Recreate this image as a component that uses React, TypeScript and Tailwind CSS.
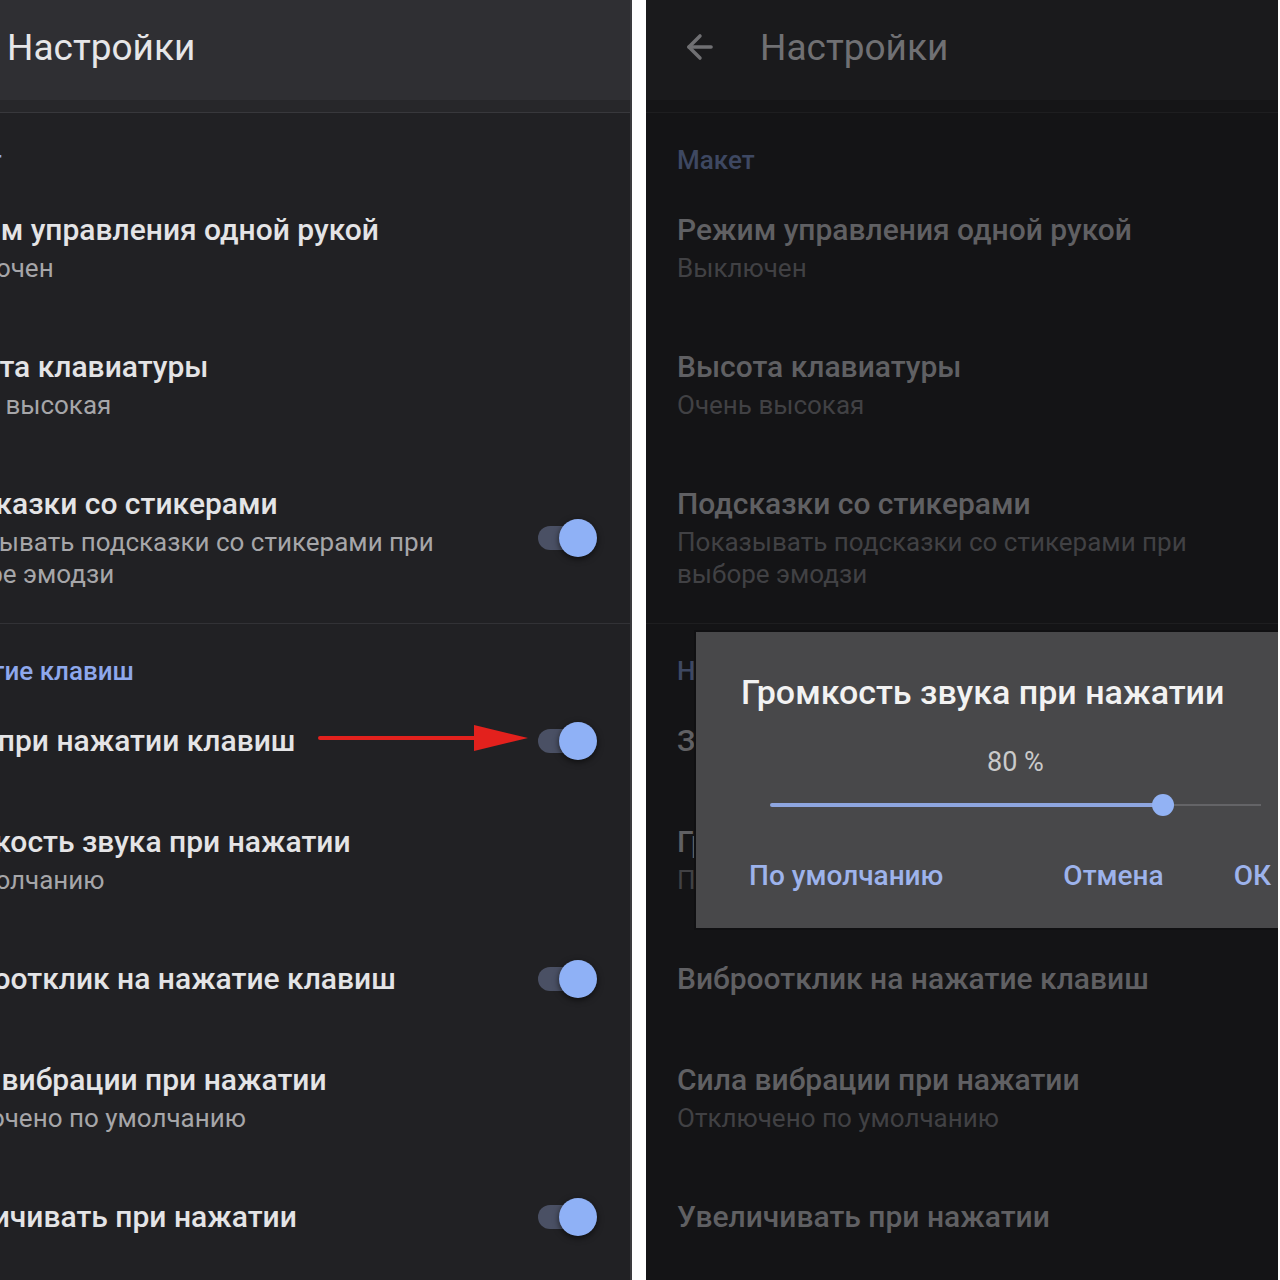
import { ArrowLeft } from 'lucide-react';

type Item = { title: string; sub?: string; toggle?: boolean };
type Section = { label: string; items: Item[] };

const sections: Section[] = [
  {
    label: 'Макет',
    items: [
      { title: 'Режим управления одной рукой', sub: 'Выключен' },
      { title: 'Высота клавиатуры', sub: 'Очень высокая' },
      {
        title: 'Подсказки со стикерами',
        sub: 'Показывать подсказки со стикерами при выборе эмодзи',
        toggle: true,
      },
    ],
  },
  {
    label: 'Нажатие клавиш',
    items: [
      { title: 'Звук при нажатии клавиш', toggle: true },
      { title: 'Громкость звука при нажатии', sub: 'По умолчанию' },
      { title: 'Виброотклик на нажатие клавиш', toggle: true },
      { title: 'Сила вибрации при нажатии', sub: 'Отключено по умолчанию' },
      { title: 'Увеличивать при нажатии', toggle: true },
    ],
  },
];

const light = {
  screen: 'bg-[#212124]',
  header: 'bg-[#2f2f33] text-[#e6e6e8]',
  band: 'bg-[#27272a] border-b border-[#38383c]',
  label: 'text-[#8ea8ec]',
  title: 'text-[#e4e4e6]',
  sub: 'text-[#a6a6a9]',
  divider: 'bg-[#323236]',
  track: 'bg-[#4a5064]',
  thumb: 'bg-[#8fb1f6] shadow-[0_2px_6px_rgba(0,0,0,0.6)]',
};

const dim = {
  screen: 'bg-[#141416]',
  header: 'bg-[#1a1a1c] text-[#707073]',
  band: 'bg-[#151517] border-b border-[#1e1e20]',
  label: 'text-[#3e4862]',
  title: 'text-[#606063]',
  sub: 'text-[#414144]',
  divider: 'bg-[#1e1e20]',
  track: 'bg-[#25282f]',
  thumb: 'bg-[#46597c]',
};

// h-0 so the knob doesn't stretch the row
const Toggle = ({ c }: { c: typeof light }) => (
  <div className="ml-auto mr-[35px] h-0 flex items-center">
    <div className={`w-[46px] h-[24px] rounded-full ${c.track}`} />
    <div className={`w-[38px] h-[38px] -ml-[25px] rounded-full ${c.thumb}`} />
  </div>
);

const Screen = ({ dimmed }: { dimmed?: boolean }) => {
  const c = dimmed ? dim : light;
  return (
    <div className={`w-[739px] h-[1280px] ${c.screen}`}>
      <div className={`h-[100px] pb-[6px] flex items-center ${c.header}`}>
        <ArrowLeft className="ml-[35px] w-[38px] h-[38px]" strokeWidth={2.2} />
        <span className="ml-[41px] text-[37px] leading-none">Настройки</span>
      </div>
      <div className={`h-[13px] ${c.band}`} />
      {sections.map((s, i) => (
        <div key={s.label}>
          {i > 0 && <div className={`h-px ${c.divider}`} />}
          <div className={`pl-[31px] pt-[34px] pb-[7px] text-[26px] leading-[26px] font-medium ${c.label}`}>
            {s.label}
          </div>
          {s.items.map((it) => (
            <div key={it.title} className="flex items-center pl-[31px] pt-[32px] pb-[33px]">
              <div className="max-w-[560px]">
                <div className={`text-[30px] leading-[36px] font-medium ${c.title}`}>{it.title}</div>
                {it.sub && (
                  <div className={`mt-[4px] text-[26px] leading-[32px] ${c.sub}`}>{it.sub}</div>
                )}
              </div>
              {it.toggle && <Toggle c={c} />}
            </div>
          ))}
        </div>
      ))}
    </div>
  );
};

const Dialog = () => (
  <div className="absolute left-[50px] top-[632px] w-[639px] h-[296px] bg-[#48484a] shadow-[0_0_0_2px_#101012]">
    <div className="pl-[45px] pt-[40px] text-[34px] leading-[40px] font-medium text-[#f2f2f2]">
      Громкость звука при нажатии
    </div>
    <div className="mt-[35px] text-center text-[27px] leading-[30px] text-[#cacaca]">80 %</div>
    <div className="mx-[74px] mt-[17px] h-[22px] flex items-center">
      <div className="h-[4px] w-[80%] bg-[#8ea6e0] rounded-l" />
      <div className="w-[22px] h-[22px] -mx-[11px] rounded-full bg-[#92b2f4] relative" />
      <div className="h-[2px] flex-1 bg-[#646467]" />
    </div>
    <div className="mt-[45px] flex items-center pl-[53px] pr-[64px] text-[28px] leading-[30px] font-medium text-[#9db3ec]">
      <span>По умолчанию</span>
      <span className="ml-auto">Отмена</span>
      <span className="ml-[70px]">ОК</span>
    </div>
  </div>
);

const RedArrow = () => (
  <svg className="absolute left-[318px] top-[722px]" width="212" height="32" viewBox="0 0 212 32">
    <line x1="2" y1="16" x2="165" y2="16" stroke="#e3211d" strokeWidth="4" strokeLinecap="round" />
    <polygon points="156,3 210,16 156,29" fill="#e3211d" />
  </svg>
);

export default function App() {
  return (
    <div
      className="flex w-[1280px] h-[1280px] bg-white overflow-hidden"
      style={{ fontFamily: 'Roboto, "Noto Sans", sans-serif' }}
    >
      <div className="relative w-[632px] h-full overflow-hidden border-r-2 border-[#3a3a3d]">
        <div className="-ml-[107px]">
          <Screen />
        </div>
        <RedArrow />
      </div>
      <div className="w-[14px] bg-white" />
      <div className="relative w-[632px] h-full overflow-hidden">
        <Screen dimmed />
        <Dialog />
      </div>
    </div>
  );
}
